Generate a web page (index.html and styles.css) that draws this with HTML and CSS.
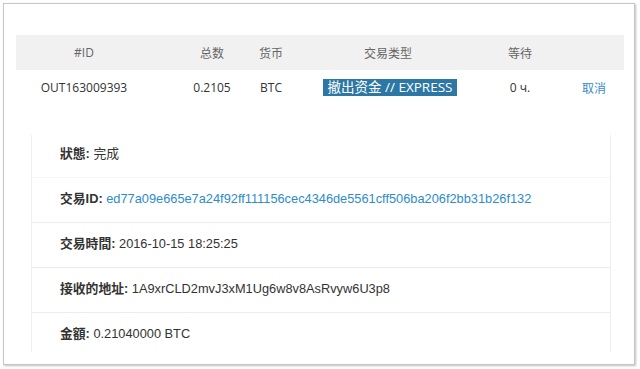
FILE: index.html
```html
<!DOCTYPE html>
<html lang="zh">
<head>
  <meta charset="UTF-8">
  <title>交易详情</title>
  <link rel="stylesheet" href="styles.css">
</head>
<body>
  <div class="frame">
    <div class="orders">
      <div class="orders-row orders-head">
        <div class="col col-id">#ID</div>
        <div class="col col-sum">总数</div>
        <div class="col col-cur">货币</div>
        <div class="col col-type">交易类型</div>
        <div class="col col-wait">等待</div>
        <div class="col col-act"></div>
      </div>
      <div class="orders-row">
        <div class="col col-id">OUT163009393</div>
        <div class="col col-sum">0.2105</div>
        <div class="col col-cur">BTC</div>
        <div class="col col-type"><span class="badge">撤出资金 // EXPRESS</span></div>
        <div class="col col-wait">0 ч.</div>
        <div class="col col-act"><a href="#" class="cancel">取消</a></div>
      </div>
    </div>

    <!-- Transaction details -->
    <div class="details">
      <div class="detail-row"><b>狀態:</b> 完成</div>
      <div class="detail-row"><b>交易ID:</b> <a href="#" class="hash">ed77a09e665e7a24f92ff111156cec4346de5561cff506ba206f2bb31b26f132</a></div>
      <div class="detail-row"><b>交易時間:</b> 2016-10-15 18:25:25</div>
      <div class="detail-row"><b>接收的地址:</b> 1A9xrCLD2mvJ3xM1Ug6w8v8AsRvyw6U3p8</div>
      <div class="detail-row"><b>金額:</b> 0.21040000 BTC</div>
    </div>
  </div>
</body>
</html>
```

FILE: styles.css
```css
* {
  margin: 0;
  padding: 0;
  box-sizing: border-box;
}

body {
  background-color: #fff;
  font-family: 'Open Sans', 'Noto Sans CJK SC', sans-serif;
  color: #333;
}

a {
  text-decoration: none;
}

.frame {
  margin: 3px;
  width: 632px;
  height: 362px;
  border: 1px solid #c6c6c6;
  box-shadow: 1px 1px 2px rgba(0, 0, 0, 0.25);
  padding: 31px 0 0 12px;
  overflow: hidden;
}

/* Orders table */
.orders {
  width: 608px;
  font-size: 12px;
}

.orders-row {
  display: grid;
  grid-template-columns: 166px 60px 58px 176px 88px 60px;
  align-items: center;
  height: 35px;
}

.orders-head {
  background-color: #f1f1f1;
  color: #666;
}

.col {
  text-align: center;
  white-space: nowrap;
}

.col-id {
  padding-right: 30px;
}

.badge {
  display: inline-block;
  background-color: #2c77a4;
  color: #fff;
  font-size: 13.5px;
  line-height: 17px;
  padding: 0 5px;
  margin-left: 4px;
}

.cancel {
  color: #3a8cc6;
}

/* Details panel */
.details {
  margin: 30px 0 0 15px;
  width: 580px;
  height: 217px;
  overflow: hidden;
  border-left: 1px solid #efefef;
  border-right: 1px solid #efefef;
  font-family: 'Liberation Sans', 'Noto Sans CJK TC', sans-serif;
  font-size: 12.8px;
  line-height: 16px;
}

.detail-row {
  height: 45px;
  padding: 13px 0 0 28px;
  border-bottom: 1px solid #ececec;
  white-space: nowrap;
}

.detail-row:first-child {
  height: 43px;
  padding-top: 11px;
  border-bottom-color: #f6f6f6;
}

.detail-row b {
  color: #333;
}

.hash {
  color: #2d8ccb;
}
```
